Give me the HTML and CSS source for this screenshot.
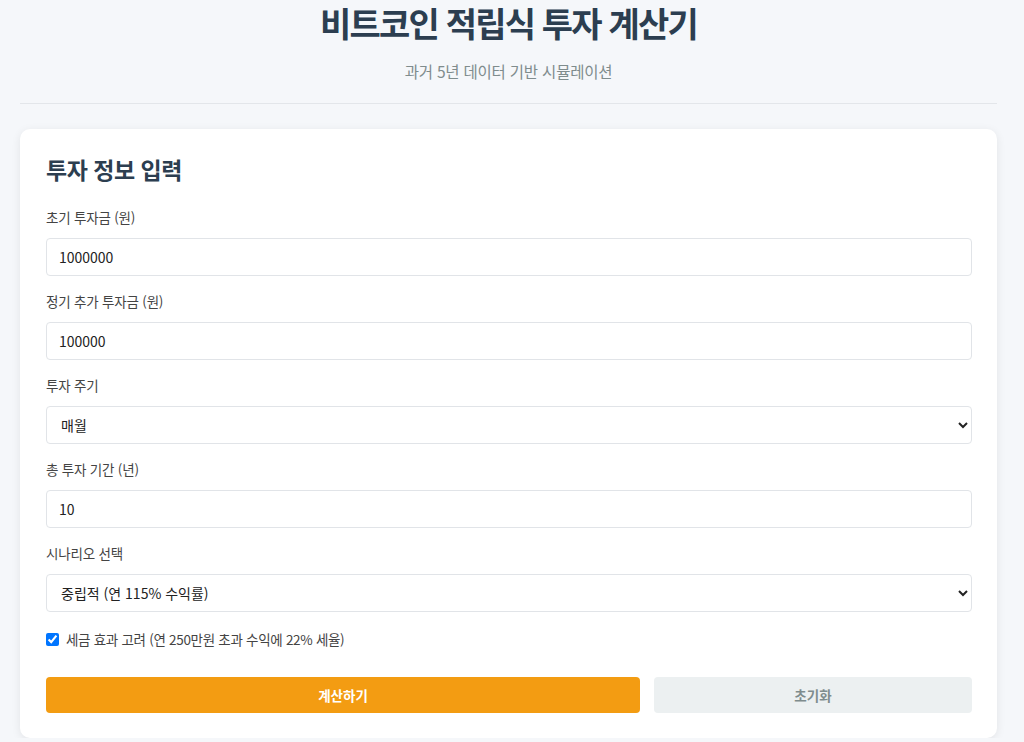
FILE: index.html
```html
<!DOCTYPE html>
<html lang="ko">
<head>
<meta charset="utf-8">
<title>비트코인 적립식 투자 계산기</title>
<link rel="stylesheet" href="styles.css">
</head>
<body>
<div class="container">
  <header class="page-header">
    <h1 class="title">비트코인 적립식 투자 계산기</h1>
    <p class="subtitle">과거 5년 데이터 기반 시뮬레이션</p>
  </header>
  <section class="card">
    <h2 class="card-title">투자 정보 입력</h2>
    <div class="form-group">
      <label class="label" for="initial">초기 투자금 (원)</label>
      <input class="field" id="initial" type="text" value="1000000">
    </div>
    <div class="form-group">
      <label class="label" for="recurring">정기 추가 투자금 (원)</label>
      <input class="field" id="recurring" type="text" value="100000">
    </div>
    <div class="form-group">
      <label class="label" for="cycle">투자 주기</label>
      <select class="field select" id="cycle">
        <option>매월</option>
        <option>매주</option>
      </select>
    </div>
    <div class="form-group">
      <label class="label" for="period">총 투자 기간 (년)</label>
      <input class="field" id="period" type="text" value="10">
    </div>
    <div class="form-group">
      <label class="label" for="scenario">시나리오 선택</label>
      <select class="field select" id="scenario">
        <option>중립적 (연 115% 수익률)</option>
      </select>
    </div>
    <div class="check-row">
      <input class="check" id="tax" type="checkbox" checked>
      <label class="check-label" for="tax">세금 효과 고려 (연 250만원 초과 수익에 22% 세율)</label>
    </div>
    <div class="actions">
      <button class="btn btn-primary" type="button">계산하기</button>
      <button class="btn btn-reset" type="button">초기화</button>
    </div>
  </section>
</div>
</body>
</html>
```

FILE: styles.css
```css
* { box-sizing: border-box; }
html, body {
  margin: 0;
  padding: 0;
  background: #f5f7fa;
  font-family: "Noto Sans CJK KR", "Noto Sans", sans-serif;
  color: #333;
}
.container {
  width: 977px;
  margin-left: 20px;
}
.page-header {
  text-align: center;
  border-bottom: 1px solid #e3e6ea;
  padding-bottom: 21px;
  margin-bottom: 25px;
}
.title {
  margin: 0;
  padding-top: 1px;
  font-size: 34px;
  line-height: 44px;
  font-weight: 700;
  color: #2c3e50;
  letter-spacing: -1.8px;
}
.subtitle {
  margin: 15px 0 0;
  font-size: 15.5px;
  line-height: 22px;
  color: #7f8c8d;
  letter-spacing: -0.2px;
}
.card {
  background: #fff;
  border-radius: 10px;
  box-shadow: 0 2px 10px rgba(0, 0, 0, 0.08);
  padding: 24px 25px 25px 26px;
}
.card-title {
  margin: 0 0 22px;
  font-size: 23px;
  line-height: 32px;
  font-weight: 700;
  color: #2c3e50;
  letter-spacing: -0.5px;
}
.form-group {
  margin-bottom: 15px;
}
.label {
  display: block;
  font-size: 13.5px;
  line-height: 20px;
  color: #444;
  margin-bottom: 11px;
  letter-spacing: -0.2px;
}
.field {
  display: block;
  width: 100%;
  height: 38px;
  padding: 0 12px;
  border: 1px solid #e1e4e8;
  border-radius: 4px;
  background: #fff;
  font-family: "Noto Sans CJK KR", "Noto Sans", sans-serif;
  font-size: 14px;
  color: #222;
}
.select {
  height: 38px;
  padding-left: 10px;
}
.check-row {
  display: flex;
  align-items: center;
  gap: 7px;
  margin-top: 17px;
  height: 20px;
}
.check {
  margin: 0;
  width: 13px;
  height: 13px;
}
.check-label {
  font-size: 13.5px;
  line-height: 20px;
  color: #444;
  letter-spacing: -0.3px;
}
.actions {
  display: flex;
  gap: 14px;
  margin-top: 28px;
}
.btn {
  height: 36px;
  padding: 0;
  border: none;
  border-radius: 4px;
  font-family: "Noto Sans CJK KR", "Noto Sans", sans-serif;
  font-size: 13.5px;
  font-weight: 700;
  cursor: pointer;
}
.btn-primary {
  flex: 594 1 0;
  background: #f39c12;
  color: #fff;
}
.btn-reset {
  flex: 318 1 0;
  background: #ecf0f1;
  color: #7f8c8d;
}
```
